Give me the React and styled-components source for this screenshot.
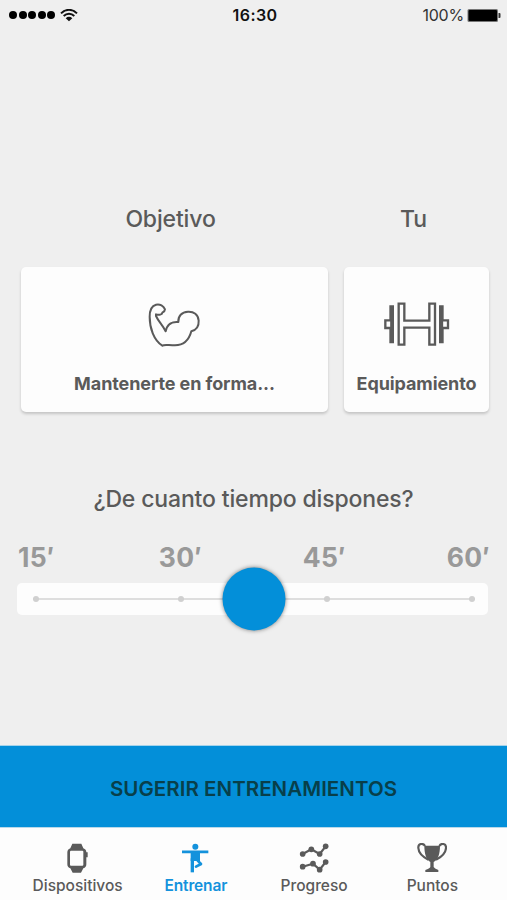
import React, { useState } from "react";
import styled, { createGlobalStyle } from "styled-components";

const times = ["15′", "30′", "45′", "60′"];

const StatusBar = () => (
  <Status>
    <Signal>
      {[...Array(5)].map((_dot, i) => (
        <SignalDot key={i} />
      ))}
      <svg width="18" height="13" viewBox="0 0 54 39" fill="none">
        <path d="M3 13 C17 -1 37 -1 51 13" stroke="#111" strokeWidth="6" />
        <path d="M11 21 C20 12 34 12 43 21" stroke="#111" strokeWidth="5.5" />
        <path d="M27 37 L17 27.5 C23 22 31 22 37 27.5 Z" fill="#111" />
      </svg>
    </Signal>
    <Clock>16:30</Clock>
    <Charge>
      100%
      <svg width="34" height="15" viewBox="0 0 34 15">
        <rect x="0.5" y="1" width="30.5" height="13" rx="1.5" fill="#777" />
        <rect x="1.5" y="2" width="28.5" height="11" rx="1" fill="#000" />
        <path d="M31.5 5 h1 q1 0 1 1 v3 q0 1 -1 1 h-1z" fill="#333" />
      </svg>
    </Charge>
  </Status>
);

const IconArm = () => (
  <svg width="54" height="46" viewBox="39 34 162 138" fill="none">
    <path
      d="M63 71 C72 74 82 72 82 66 C86 64 90 61 90 56 C86 46 75 39 63 42 C48 46 44 58 44 78 C44 112 56 148 82 165 C88 160 100 164 120 164 C146 164 162 148 169 122 C185 118 192 108 191 90 C190 71 176 62 159 63 C140 64 129 76 130 94 C112 92 96 100 92 122 C85 105 70 92 63 76 Z"
      stroke="#5a5a5a"
      strokeWidth="6"
      strokeLinejoin="round"
    />
  </svg>
);

const IconDumbbell = () => (
  <svg width="66" height="44" viewBox="27 33 198 132" fill="none">
    <path d="M43 43h14v114h-14zM192 43h14v114h-14z" fill="#5a5a5a" />
    <g stroke="#5a5a5a" strokeWidth="7">
      <path d="M31 88h18v23h-18zM201 88h18v23h-18z" fill="#fdfdfd" />
      <path d="M71 38H88V89H163V38H180V161H163V110H88V161H71Z" />
    </g>
  </svg>
);

const IconWatch = () => (
  <svg width="30" height="30" viewBox="186 54 90 90" fill="currentColor">
    <path d="M217 56H244L250 70Q259 73 259 82H263V97H259V118Q259 127 250 130L243 143H218L211 130Q202 127 202 118V82Q202 73 211 70Z" />
    <rect x="210" y="77" width="40" height="45" rx="3" fill="#fdfdfd" />
  </svg>
);

const IconPose = () => (
  <svg width="30" height="30" viewBox="540 54 90 90" fill="none">
    <circle cx="586" cy="65" r="9" fill="currentColor" />
    <path d="M546 76.5H625V85H600V108H572V85H546Z" fill="currentColor" />
    <path d="M572 100H582V142H572Z" fill="currentColor" />
    <path
      d="M593 107L603 117L588 125"
      stroke="currentColor"
      strokeWidth="8"
      strokeLinejoin="round"
      strokeLinecap="round"
    />
  </svg>
);

const IconChart = () => (
  <svg width="30" height="30" viewBox="136 54 90 90" fill="currentColor">
    <path
      d="M147 87L173 73L198 87L216 64M147 125L178 116L198 134L216 111"
      fill="none"
      stroke="currentColor"
      strokeWidth="6.5"
    />
    {[
      [147, 87],
      [173, 73],
      [198, 87],
      [216, 64],
      [147, 125],
      [178, 116],
      [198, 134],
      [216, 111],
    ].map(([cx, cy]) => (
      <circle key={cx + "-" + cy} cx={cx} cy={cy} r="8.5" />
    ))}
  </svg>
);

const IconTrophy = () => (
  <svg width="30" height="30" viewBox="489 54 90 90" fill="currentColor">
    <path d="M511 62H558C558 87 552 104 539 111V126Q541 131 553 135V141H514V135Q527 131 529 126V111C517 104 511 87 511 62Z" />
    <path
      d="M513 63C508 54 492 54 493 69C494 85 507 96 523 104M556 63C561 54 577 54 576 69C575 85 562 96 546 104"
      fill="none"
      stroke="currentColor"
      strokeWidth="6.5"
    />
  </svg>
);

const tabs = [
  { label: "Dispositivos", icon: <IconWatch /> },
  { label: "Entrenar", icon: <IconPose /> },
  { label: "Progreso", icon: <IconChart /> },
  { label: "Puntos", icon: <IconTrophy /> },
];

const App = () => {
  const [active, setActive] = useState("Entrenar");
  const [position, setPosition] = useState(50);

  return (
    <>
      <GlobalStyle />
      <Screen>
        <StatusBar />
        <Headings>
          <Heading>Objetivo</Heading>
          <Heading>Tu</Heading>
        </Headings>
        <Cards>
          <Card>
            <IconArm />
            <CardLabel>Mantenerte en forma...</CardLabel>
          </Card>
          <Card>
            <IconDumbbell />
            <CardLabel>Equipamiento</CardLabel>
          </Card>
        </Cards>

        <Question>¿De cuanto tiempo dispones?</Question>
        <Times>
          {times.map((time, i) => (
            <Time
              key={time}
              onClick={() => setPosition((i * 100) / (times.length - 1))}
            >
              {time}
            </Time>
          ))}
        </Times>
        <Track>
          <Line>
            {times.map((time) => (
              <Stop key={time} />
            ))}
            <Knob style={{ left: `${position}%` }} />
          </Line>
        </Track>

        <Suggest>SUGERIR ENTRENAMIENTOS</Suggest>
        <TabBar>
          {tabs.map(({ label, icon }) => (
            <Tab
              key={label}
              $active={label === active}
              onClick={() => setActive(label)}
            >
              {icon}
              <span>{label}</span>
            </Tab>
          ))}
        </TabBar>
      </Screen>
    </>
  );
};

const GlobalStyle = createGlobalStyle`
  * {
    box-sizing: border-box;
  }

  body {
    margin: 0;
    background: #efefef;
  }

  button {
    border: none;
    padding: 0;
    background: none;
    font: inherit;
    letter-spacing: inherit;
    cursor: pointer;
  }
`;

const Screen = styled.div`
  display: flex;
  flex-direction: column;
  width: 507px;
  height: 900px;
  overflow: hidden;
  background: #efefef;
  color: #5a5a5a;
  font-family: Inter, "Liberation Sans", sans-serif;
  white-space: nowrap;
`;

const Status = styled.div`
  display: grid;
  grid-template-columns: 1fr auto 1fr;
  align-items: center;
  height: 30px;
  padding: 0 6px 0 9px;
  color: #111;
  font-size: 16px;
`;

const Signal = styled.div`
  display: flex;
  align-items: center;
  gap: 1.5px;

  svg {
    margin-left: 3px;
  }
`;

const SignalDot = styled.span`
  width: 8px;
  height: 8px;
  border-radius: 50%;
  background: #000;
`;

const Clock = styled.span`
  font-weight: 600;
  letter-spacing: 0.4px;
`;

const Charge = styled.div`
  display: flex;
  align-items: center;
  justify-content: flex-end;
  gap: 3px;
  color: #333;
  letter-spacing: -0.2px;
`;

const Headings = styled.div`
  display: grid;
  grid-template-columns: 307px 145px;
  gap: 17px;
  margin: 175px 0 0 17px;
`;

const Heading = styled.h2`
  margin: 0;
  font-size: 23px;
  font-weight: 450;
  letter-spacing: -0.15px;
  line-height: 28px;
  text-align: center;
`;

const Cards = styled.div`
  display: grid;
  grid-template-columns: 307px 145px;
  gap: 16px;
  margin: 34px 0 0 21px;
`;

const Card = styled.button`
  display: flex;
  flex-direction: column;
  align-items: center;
  justify-content: space-between;
  height: 145px;
  padding: 35px 0 17px;
  border-radius: 5px;
  background: #fdfdfd;
  box-shadow: 0 2px 3px rgba(0, 0, 0, 0.18);
  color: #5a5a5a;
`;

const CardLabel = styled.span`
  font-size: 18px;
  font-weight: 650;
  letter-spacing: -0.1px;
  line-height: 22px;
`;

const Question = styled.h2`
  margin: 73px 0 0;
  font-size: 23px;
  font-weight: 450;
  letter-spacing: -0.15px;
  line-height: 28px;
  text-align: center;
`;

const Times = styled.div`
  display: flex;
  justify-content: space-between;
  margin: 28px 17px 0 18px;
`;

const Time = styled.button`
  min-width: 40px;
  color: #999;
  font-size: 26.5px;
  font-weight: 650;
  letter-spacing: 0.3px;
  line-height: 32px;
  text-align: left;
`;

const Track = styled.div`
  display: flex;
  align-items: center;
  height: 32px;
  margin: 10px 19px 0 17px;
  padding: 0 13px 0 16px;
  border-radius: 5px;
  background: #fdfdfd;
`;

const Line = styled.div`
  position: relative;
  display: flex;
  align-items: center;
  justify-content: space-between;
  flex: 1;
  height: 6px;
  background: linear-gradient(#dedede, #dedede) center / 100% 2px no-repeat;
`;

const Stop = styled.span`
  width: 6px;
  height: 6px;
  border-radius: 50%;
  background: #d0d0d0;
`;

const Knob = styled.div`
  position: absolute;
  top: 50%;
  width: 63px;
  height: 63px;
  border-radius: 50%;
  background: #038fd9;
  box-shadow: 0 0 4px rgba(0, 0, 0, 0.5);
  transform: translate(-50%, -50%);
`;

const Suggest = styled.button`
  && {
    height: 82px;
    margin-top: auto;
    padding-top: 3px;
    border-top: 1px solid #a5d3ea;
    background: #038fd9;
    color: #083f4a;
    font-size: 20.5px;
    font-weight: 600;
    letter-spacing: 0.05px;
  }
`;

const TabBar = styled.nav`
  display: grid;
  grid-template-columns: repeat(4, 1fr);
  height: 73px;
  padding: 0 16px 0 18px;
  border-top: 1px solid #b9d9ea;
  background: #fdfdfd;
`;

const Tab = styled.button`
  display: flex;
  flex-direction: column;
  align-items: center;
  padding-top: 15px;
  color: ${({ $active }) => ($active ? "#1492dc" : "#5a5a5a")};
  font-size: 15.5px;
  font-weight: ${({ $active }) => ($active ? 600 : 500)};
  letter-spacing: ${({ $active }) => ($active ? "-0.15px" : "0")};

  span {
    margin-top: 3px;
    padding-left: 1px;
    line-height: 20px;
  }
`;

export default App;
